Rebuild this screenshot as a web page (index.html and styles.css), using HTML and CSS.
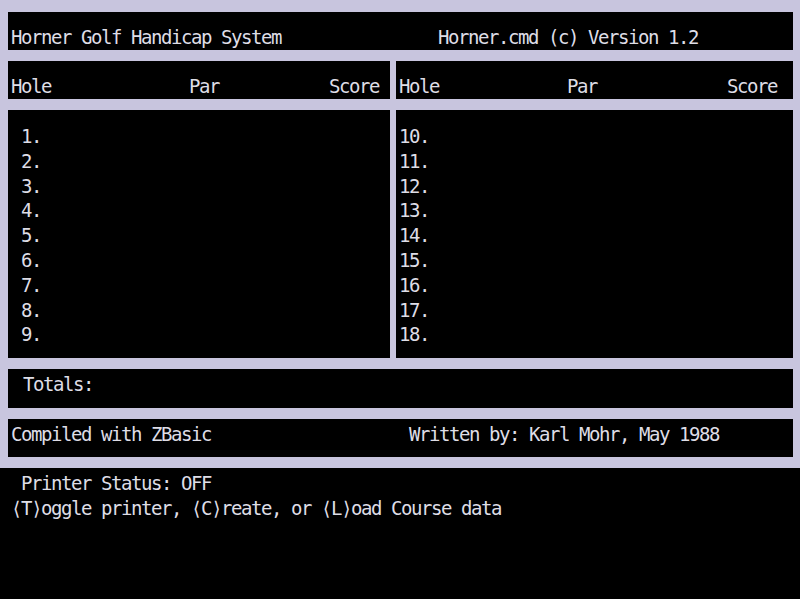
FILE: index.html
```html
<!DOCTYPE html>
<html lang="en">
<head>
    <meta charset="UTF-8">
    <meta name="viewport" content="width=device-width, initial-scale=1.0">
    <title>Horner Golf Handicap System</title>
    <link rel="stylesheet" href="styles.css">
</head>
<body>
    <div class="screen">
        <div class="frame">
            <div class="box title">
                <span>Horner Golf Handicap System</span>
                <span>Horner.cmd (c) Version 1.2</span>
            </div>

            <div class="card">
                <div class="box head head-left">
                    <span>Hole</span>
                    <span>Par</span>
                    <span>Score</span>
                </div>
                <div class="box head head-right">
                    <span>Hole</span>
                    <span>Par</span>
                    <span>Score</span>
                </div>
                <div class="box holes holes-left">
                    <div>1.</div>
                    <div>2.</div>
                    <div>3.</div>
                    <div>4.</div>
                    <div>5.</div>
                    <div>6.</div>
                    <div>7.</div>
                    <div>8.</div>
                    <div>9.</div>
                </div>
                <div class="box holes holes-right">
                    <div>10.</div>
                    <div>11.</div>
                    <div>12.</div>
                    <div>13.</div>
                    <div>14.</div>
                    <div>15.</div>
                    <div>16.</div>
                    <div>17.</div>
                    <div>18.</div>
                </div>
            </div>

            <div class="box totals">Totals:</div>

            <div class="box credits">
                <span>Compiled with ZBasic</span>
                <span>Written by: Karl Mohr, May 1988</span>
            </div>
        </div>

        <div class="status">Printer Status: OFF</div>
        <div class="prompt">&#10216;T&#10217;oggle printer, &#10216;C&#10217;reate, or &#10216;L&#10217;oad Course data</div>
    </div>
</body>
</html>
```

FILE: styles.css
```css
body {
    margin: 0;
    background-color: #000;
}

.screen {
    width: 800px;
    height: 599px;
    overflow: hidden;
    background-color: #000;
    color: #dedde6;
    font-family: "DejaVu Sans Mono", "Liberation Mono", monospace;
    font-size: 19px;
    letter-spacing: -1.44px;
    line-height: 24.8px;
    white-space: nowrap;
}

/* lavender border around all boxes */
.frame {
    background-color: #c8c5de;
    padding: 12px 7px 11px 8px;
    display: flex;
    flex-direction: column;
    gap: 11px;
}

.box {
    background-color: #000;
    box-sizing: border-box;
}

.title {
    height: 38px;
    padding: 13px 0 0 3px;
    display: grid;
    grid-template-columns: 427px auto;
}

.card {
    display: grid;
    grid-template-columns: 382px 1fr;
    column-gap: 6px;
    row-gap: 11px;
}

.head {
    height: 38px;
    padding: 13px 0 0 3px;
    display: grid;
}

.head-left {
    grid-template-columns: 178px 140px auto;
}

.head-right {
    grid-template-columns: 168px 160px auto;
}

.holes {
    height: 248px;
    padding-top: 14px;
}

.holes-left {
    padding-left: 13px;
}

.holes-right {
    padding-left: 3px;
}

.totals {
    height: 39px;
    padding: 3px 0 0 15px;
}

.credits {
    height: 38px;
    padding: 3px 0 0 3px;
    display: grid;
    grid-template-columns: 398px auto;
}

.status {
    margin-top: 3px;
    padding-left: 21px;
}

.prompt {
    padding-left: 11px;
}
```
